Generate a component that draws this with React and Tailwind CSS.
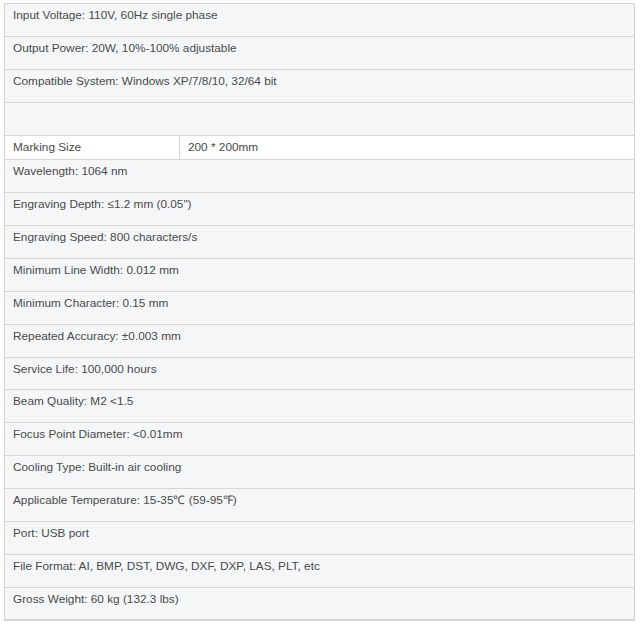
import React from "react";

const top = [
  "Input Voltage: 110V, 60Hz single phase",
  "Output Power: 20W, 10%-100% adjustable",
  "Compatible System: Windows XP/7/8/10, 32/64 bit",
  "",
];

const bottom = [
  "Wavelength: 1064 nm",
  "Engraving Depth: ≤1.2 mm (0.05\")",
  "Engraving Speed: 800 characters/s",
  "Minimum Line Width: 0.012 mm",
  "Minimum Character: 0.15 mm",
  "Repeated Accuracy: ±0.003 mm",
  "Service Life: 100,000 hours",
  "Beam Quality: M2 <1.5",
  "Focus Point Diameter: <0.01mm",
  "Cooling Type: Built-in air cooling",
  "Applicable Temperature: 15-35℃ (59-95℉)",
  "Port: USB port",
  "File Format: AI, BMP, DST, DWG, DXF, DXP, LAS, PLT, etc",
  "Gross Weight: 60 kg (132.3 lbs)",
];

function Row({ text, h }) {
  return (
    <div
      className={`${h} border-b border-[#d6d7d9] bg-[#f5f6f8] pl-[8px] pt-[3px] leading-[16px]`}
    >
      {text}
    </div>
  );
}

export default function App() {
  return (
    <div className="w-[640px] h-[630px] bg-white pt-[3px] pl-[4px]">
      <div
        className="w-[631px] border border-[#d3d4d6] text-[11.8px] text-[#4a4a4a]"
        style={{ fontFamily: '"Liberation Sans", Arial, sans-serif' }}
      >
        {top.map((t, i) => (
          <Row key={i} text={t} h="h-[33px]" />
        ))}
        <div className="flex h-[24px] border-b border-[#d6d7d9] bg-white">
          <div className="w-[175px] border-r border-[#d6d7d9] pl-[8px] flex items-center">
            Marking Size
          </div>
          <div className="flex-1 pl-[8px] flex items-center">200 * 200mm</div>
        </div>
        {bottom.map((t, i) => (
          <Row key={i} text={t} h={i % 7 === 6 ? "h-[32px]" : "h-[33px]"} />
        ))}
      </div>
    </div>
  );
}
